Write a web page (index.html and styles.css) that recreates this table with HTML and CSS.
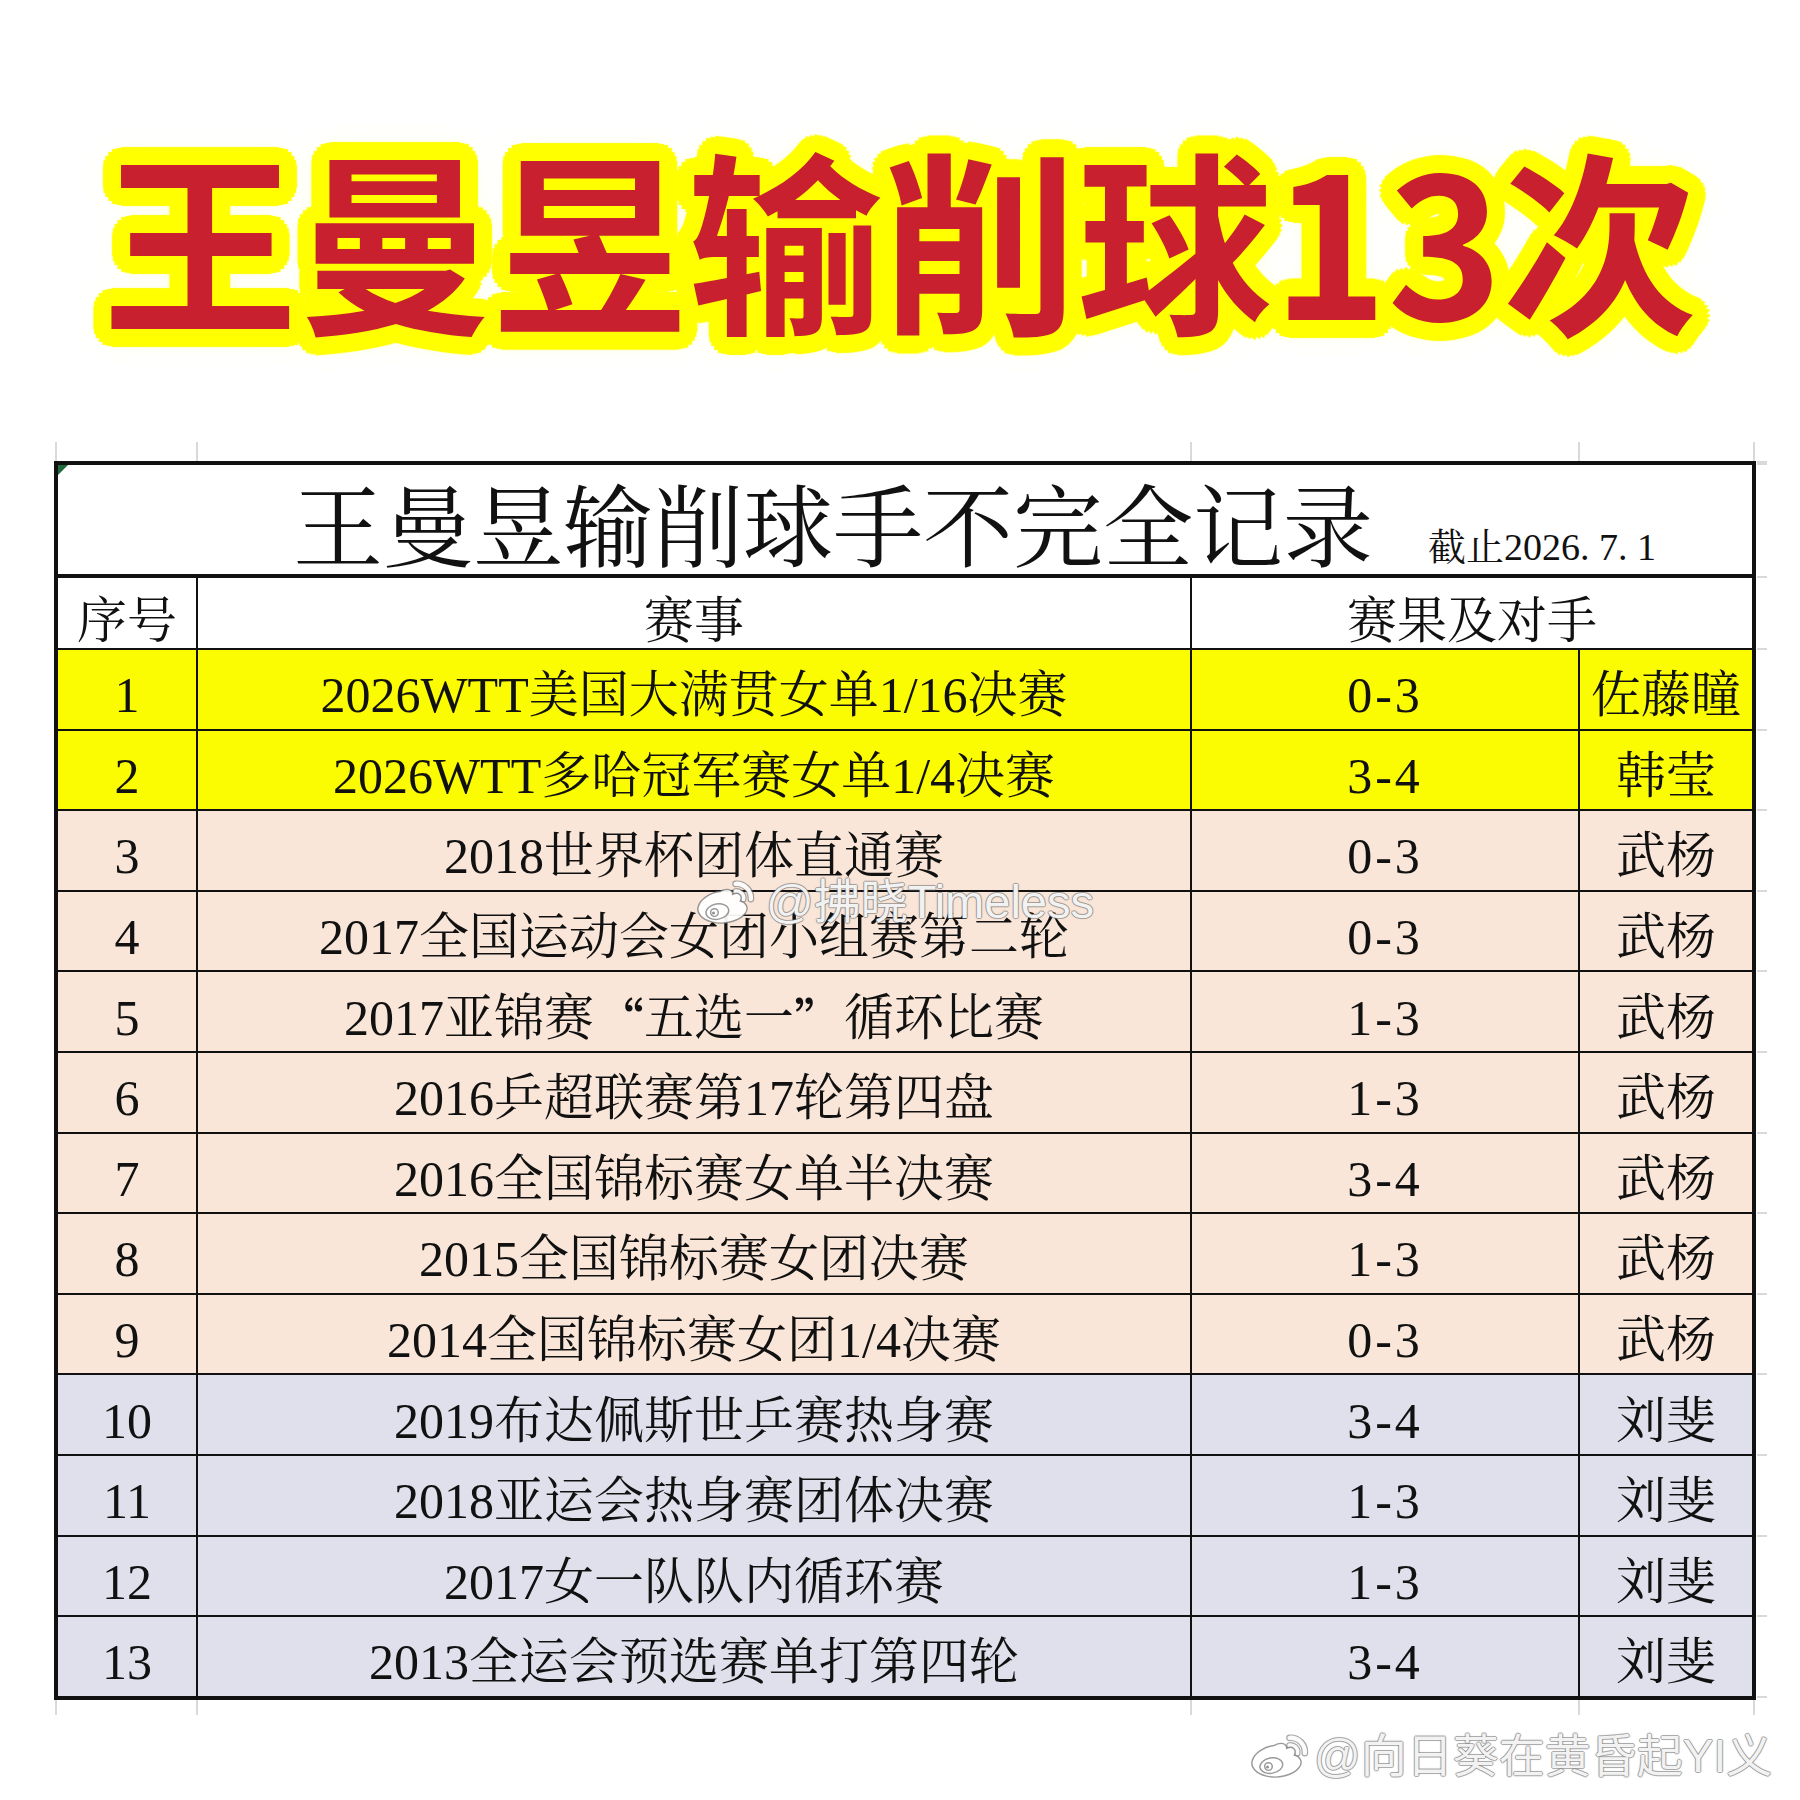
FILE: index.html
```html
<!DOCTYPE html>
<html lang="zh-CN">
<head>
<meta charset="utf-8">
<title>王曼昱输削球13次</title>
<link rel="stylesheet" href="styles.css">
</head>
<body>
<div class="page">
  <h1 class="headline">王曼昱输削球13次</h1>

  <div class="sheet">
    <div class="ticks ticks-top">
      <div class="tick t1"></div><div class="tick t2"></div><div class="tick t3"></div><div class="tick t4"></div><div class="tick t5"></div>
    </div>

    <div class="sheet-body">
      <div class="table">
        <div class="title">
          <span class="title-main">王曼昱输削球手不完全记录</span>
          <span class="title-date">截止2026. 7. 1</span>
        </div>

        <div class="cell head">序号</div>
        <div class="cell head">赛事</div>
        <div class="cell head span2">赛果及对手</div>

        <div class="cell y">1</div><div class="cell y">2026WTT美国大满贯女单1/16决赛</div><div class="cell y score">0-3</div><div class="cell y">佐藤瞳</div>
        <div class="cell y">2</div><div class="cell y">2026WTT多哈冠军赛女单1/4决赛</div><div class="cell y score">3-4</div><div class="cell y">韩莹</div>

        <div class="cell p">3</div><div class="cell p">2018世界杯团体直通赛</div><div class="cell p score">0-3</div><div class="cell p">武杨</div>
        <div class="cell p">4</div><div class="cell p">2017全国运动会女团小组赛第二轮</div><div class="cell p score">0-3</div><div class="cell p">武杨</div>
        <div class="cell p">5</div><div class="cell p">2017亚锦赛<span class="cjk">“</span>五选一<span class="cjk">”</span>循环比赛</div><div class="cell p score">1-3</div><div class="cell p">武杨</div>
        <div class="cell p">6</div><div class="cell p">2016乒超联赛第17轮第四盘</div><div class="cell p score">1-3</div><div class="cell p">武杨</div>
        <div class="cell p">7</div><div class="cell p">2016全国锦标赛女单半决赛</div><div class="cell p score">3-4</div><div class="cell p">武杨</div>
        <div class="cell p">8</div><div class="cell p">2015全国锦标赛女团决赛</div><div class="cell p score">1-3</div><div class="cell p">武杨</div>
        <div class="cell p">9</div><div class="cell p">2014全国锦标赛女团1/4决赛</div><div class="cell p score">0-3</div><div class="cell p">武杨</div>

        <div class="cell b">10</div><div class="cell b">2019布达佩斯世乒赛热身赛</div><div class="cell b score">3-4</div><div class="cell b">刘斐</div>
        <div class="cell b">11</div><div class="cell b">2018亚运会热身赛团体决赛</div><div class="cell b score">1-3</div><div class="cell b">刘斐</div>
        <div class="cell b">12</div><div class="cell b">2017女一队队内循环赛</div><div class="cell b score">1-3</div><div class="cell b">刘斐</div>
        <div class="cell b">13</div><div class="cell b">2013全运会预选赛单打第四轮</div><div class="cell b score">3-4</div><div class="cell b">刘斐</div>
      </div>

      <div class="stubs">
        <div class="stub s-top"></div><div class="stub s-title"></div><div class="stub s-head"></div>
        <div class="stub"></div><div class="stub"></div><div class="stub"></div><div class="stub"></div><div class="stub"></div>
        <div class="stub"></div><div class="stub"></div><div class="stub"></div><div class="stub"></div><div class="stub"></div>
        <div class="stub"></div><div class="stub"></div><div class="stub"></div>
      </div>
    </div>

    <div class="ticks ticks-bottom">
      <div class="tick t1"></div><div class="tick t2"></div><div class="tick t3"></div><div class="tick t4"></div><div class="tick t5"></div>
    </div>
  </div>

  <div class="wm wm-center">
    <svg class="wb" viewBox="0 0 64 48" width="62" height="46">
      <path class="wb-arc-o" d="M43 5A15 15 0 0 1 59 21M43 13A7 7 0 0 1 51 21"/>
      <path class="wb-arc" d="M43 5A15 15 0 0 1 59 21M43 13A7 7 0 0 1 51 21"/>
      <path class="wb-body" d="M27 13C34 9 40 11 40 16C46 13 51 17 48 23C55 25 57 31 53 36C47 44 31 48 19 45C8 42 2 36 4 29C6 21 17 14 27 13Z"/>
      <ellipse class="wb-eye" cx="24" cy="34" rx="12" ry="8" transform="rotate(-10 24 34)"/>
      <circle class="wb-pupil" cx="21" cy="35" r="4"/>
      <circle class="wb-dot" cx="20" cy="35.5" r="1.6"/>
    </svg>
    <span>@拂晓Timeless</span>
  </div>

  <div class="wm wm-corner">
    <svg class="wb" viewBox="0 0 64 48" width="62" height="46">
      <path class="wb-arc-o" d="M43 5A15 15 0 0 1 59 21M43 13A7 7 0 0 1 51 21"/>
      <path class="wb-arc" d="M43 5A15 15 0 0 1 59 21M43 13A7 7 0 0 1 51 21"/>
      <path class="wb-body" d="M27 13C34 9 40 11 40 16C46 13 51 17 48 23C55 25 57 31 53 36C47 44 31 48 19 45C8 42 2 36 4 29C6 21 17 14 27 13Z"/>
      <ellipse class="wb-eye" cx="24" cy="34" rx="12" ry="8" transform="rotate(-10 24 34)"/>
      <circle class="wb-pupil" cx="21" cy="35" r="4"/>
      <circle class="wb-dot" cx="20" cy="35.5" r="1.6"/>
    </svg>
    <span>@向日葵在黄昏起YI义</span>
  </div>
</div>
</body>
</html>
```

FILE: styles.css
```css
body {
  margin: 0;
  background: #ffffff;
}

.page {
  position: relative;
  width: 1800px;
  height: 1800px;
  overflow: hidden;
  background: #ffffff;
  color: #111111;
  font-family: "Liberation Serif", "Noto Serif CJK SC", "Noto Sans CJK SC", serif;
}

/* ---------- headline ---------- */
.headline {
  margin: 0;
  padding-top: 138px;
  height: 195px;
  font-family: "Noto Sans CJK SC", "Noto Sans", sans-serif;
  font-weight: 700;
  font-size: 195px;
  line-height: 195px;
  text-align: center;
  white-space: nowrap;
  color: #c8202e;
  text-shadow:
    18px 0 1px #ffff00, 17.4px 4.7px 1px #ffff00, 15.6px 9px 1px #ffff00, 12.7px 12.7px 1px #ffff00,
    9px 15.6px 1px #ffff00, 4.7px 17.4px 1px #ffff00, 0 18px 1px #ffff00, -4.7px 17.4px 1px #ffff00,
    -9px 15.6px 1px #ffff00, -12.7px 12.7px 1px #ffff00, -15.6px 9px 1px #ffff00, -17.4px 4.7px 1px #ffff00,
    -18px 0 1px #ffff00, -17.4px -4.7px 1px #ffff00, -15.6px -9px 1px #ffff00, -12.7px -12.7px 1px #ffff00,
    -9px -15.6px 1px #ffff00, -4.7px -17.4px 1px #ffff00, 0 -18px 1px #ffff00, 4.7px -17.4px 1px #ffff00,
    9px -15.6px 1px #ffff00, 12.7px -12.7px 1px #ffff00, 15.6px -9px 1px #ffff00, 17.4px -4.7px 1px #ffff00,
    9px 0 0 #ffff00, 6.4px 6.4px 0 #ffff00, 0 9px 0 #ffff00, -6.4px 6.4px 0 #ffff00,
    -9px 0 0 #ffff00, -6.4px -6.4px 0 #ffff00, 0 -9px 0 #ffff00, 6.4px -6.4px 0 #ffff00,
    0 0 30px rgba(255, 255, 80, 0.55);
}

/* ---------- sheet ---------- */
.sheet {
  margin-top: 109px;
  padding-left: 54px;
}

.ticks {
  display: flex;
  margin-left: 1px;
}

.ticks-top {
  height: 19px;
}

.ticks-bottom {
  height: 15px;
}

.tick {
  box-sizing: border-box;
  height: 100%;
  border-left: 2px solid #d9d9d9;
}

.t1 { width: 141px; }
.t2 { width: 994px; }
.t3 { width: 388px; }
.t4 { width: 175px; }
.t5 { width: 2px; }

.sheet-body {
  display: flex;
  align-items: flex-start;
}

.table {
  display: grid;
  grid-template-columns: 138px 992px 386px 172px;
  grid-template-rows: 111px 70px repeat(13, 78.6px);
  gap: 2px;
  background: #111111;
  border: 4px solid #111111;
}

.title {
  position: relative;
  grid-column: 1 / -1;
  box-sizing: border-box;
  display: flex;
  align-items: baseline;
  padding: 20px 0 0 235px;
  background: #ffffff;
  border-bottom: 2px solid #111111;
  white-space: nowrap;
}

.title::before {
  content: "";
  position: absolute;
  left: 0;
  top: 0;
  border-top: 10px solid #1f6a3c;
  border-right: 10px solid transparent;
}

.title-main {
  font-size: 90px;
  line-height: 1;
}

.title-date {
  margin-left: 55px;
  font-size: 38px;
  line-height: 1;
}

.cell {
  box-sizing: border-box;
  display: flex;
  align-items: center;
  justify-content: center;
  padding-top: 12px;
  font-size: 50px;
  line-height: 1;
  white-space: nowrap;
}

.head {
  padding-top: 16px;
  background: #ffffff;
}

.span2 {
  grid-column: span 2;
}

.y { background: #fbfb02; }
.p { background: #f9e6d8; }
.b { background: #dfe0ec; }

.score {
  letter-spacing: 3px;
}

.cjk {
  font-family: "Noto Sans CJK SC", sans-serif;
}

/* stubs to the right of the table (sheet gridlines) */
.stubs {
  display: grid;
  grid-template-rows: 4px 113px 72px repeat(13, 80.6px);
  width: 10px;
  margin-left: 1px;
}

.stub {
  box-sizing: border-box;
  border-bottom: 2px solid #d9d9d9;
}

.s-top {
  border-bottom-width: 4px;
}

/* ---------- watermarks ---------- */
.wm {
  position: absolute;
  display: flex;
  align-items: center;
  font-family: "Liberation Sans", "Noto Sans CJK SC", sans-serif;
  line-height: 1;
  white-space: nowrap;
  color: rgba(255, 255, 255, 0.93);
  text-shadow:
    1px 0 0 rgba(120, 120, 120, 0.55),
    -1px 0 0 rgba(120, 120, 120, 0.55),
    0 1px 0 rgba(120, 120, 120, 0.55),
    0 -1px 0 rgba(120, 120, 120, 0.55),
    0 0 2px rgba(80, 80, 80, 0.5);
}

.wm-center {
  left: 694px;
  top: 878px;
  gap: 10px;
  font-size: 47px;
}

.wm-corner {
  left: 1248px;
  top: 1733px;
  gap: 4px;
  font-size: 46px;
}

.wb {
  display: block;
  flex: none;
}

.wb-body,
.wb-eye,
.wb-pupil {
  fill: rgba(255, 255, 255, 0.93);
  stroke: rgba(110, 110, 110, 0.7);
  stroke-width: 1.5;
}

.wb-dot {
  fill: rgba(110, 110, 110, 0.75);
}

.wb-arc-o {
  fill: none;
  stroke: rgba(110, 110, 110, 0.6);
  stroke-width: 7;
  stroke-linecap: round;
}

.wb-arc {
  fill: none;
  stroke: rgba(255, 255, 255, 0.95);
  stroke-width: 4.5;
  stroke-linecap: round;
}
```
